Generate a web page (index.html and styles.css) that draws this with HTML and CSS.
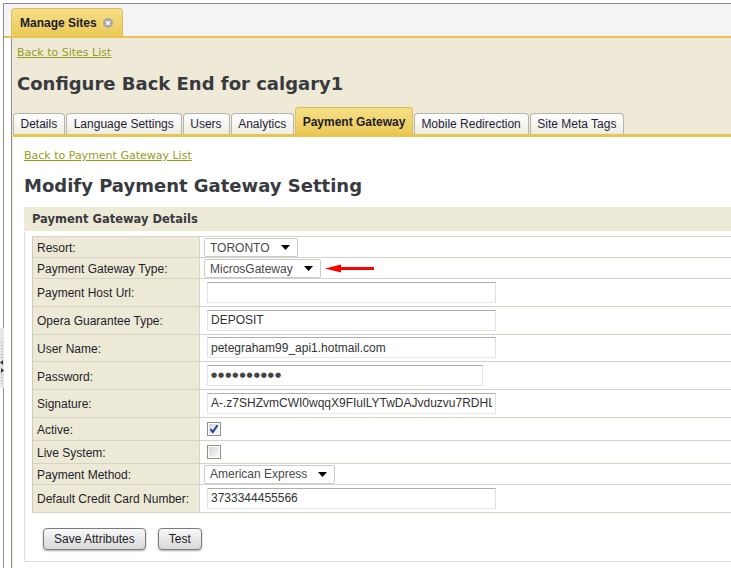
FILE: index.html
```html
<!DOCTYPE html>
<html lang="en">
<head>
<meta charset="utf-8">
<title>Configure Back End</title>
<link rel="stylesheet" href="styles.css">
</head>
<body>
<div class="splitter">
  <svg width="4" height="60" viewBox="0 0 4 60">
    <g fill="#9a9a9a">
      <rect x="1.5" y="14" width="1" height="1"/><rect x="1.5" y="17" width="1" height="1"/><rect x="1.5" y="20" width="1" height="1"/><rect x="1.5" y="23" width="1" height="1"/><rect x="1.5" y="26" width="1" height="1"/><rect x="1.5" y="29" width="1" height="1"/>
      <rect x="1.5" y="46" width="1" height="1"/><rect x="1.5" y="49" width="1" height="1"/><rect x="1.5" y="52" width="1" height="1"/><rect x="1.5" y="55" width="1" height="1"/>
    </g>
    <path d="M0 34.5 L3 32 L3 37 Z M1 40 L4 42.5 L1 45 Z" fill="#333"/>
  </svg>
</div>
<div class="frame">
  <div class="doc-tabs">
    <div class="doc-tab">Manage Sites
      <svg class="close" width="10" height="10" viewBox="0 0 10 10"><circle cx="5" cy="5" r="5" fill="#a9a9a9"/><path d="M3.2 3.2 L6.8 6.8 M6.8 3.2 L3.2 6.8" stroke="#fff" stroke-width="1.4"/></svg>
    </div>
  </div>
  <div class="panel">
    <div class="panel-head">
      <a class="link" href="#">Back to Sites List</a>
      <h1 class="title">Configure Back End for calgary1</h1>
    </div>
    <div class="tabs">
      <div class="tab">Details</div>
      <div class="tab">Language Settings</div>
      <div class="tab">Users</div>
      <div class="tab">Analytics</div>
      <div class="tab active">Payment Gateway</div>
      <div class="tab">Mobile Redirection</div>
      <div class="tab">Site Meta Tags</div>
    </div>
    <div class="content">
      <a class="link" href="#">Back to Payment Gateway List</a>
      <h2 class="title sub">Modify Payment Gateway Setting</h2>
      <div class="section-title">Payment Gateway Details</div>
      <div class="box">
        <table class="form">
          <tr class="r-sel"><td class="lbl"><div class="cell">Resort:</div></td><td class="val"><div class="cell"><span class="select">TORONTO<svg class="tri" width="9" height="5" viewBox="0 0 9 5"><path d="M0 0 H9 L4.5 5 Z" fill="#000"/></svg></span></div></td></tr>
          <tr class="r-sel"><td class="lbl"><div class="cell">Payment Gateway Type:</div></td><td class="val"><div class="cell"><span class="select">MicrosGateway<svg class="tri" width="9" height="5" viewBox="0 0 9 5"><path d="M0 0 H9 L4.5 5 Z" fill="#000"/></svg></span><svg class="red-arrow" width="49" height="9" viewBox="0 0 49 9"><path d="M0 4.5 L16 0.5 L16 3 H49 V6 H16 V8.5 Z" fill="#f00"/></svg></div></td></tr>
          <tr class="r-inp"><td class="lbl"><div class="cell">Payment Host Url:</div></td><td class="val"><div class="cell"><input class="field" type="text" value=""></div></td></tr>
          <tr class="r-inp"><td class="lbl"><div class="cell">Opera Guarantee Type:</div></td><td class="val"><div class="cell"><input class="field" type="text" value="DEPOSIT"></div></td></tr>
          <tr class="r-inp"><td class="lbl"><div class="cell">User Name:</div></td><td class="val"><div class="cell"><input class="field" type="text" value="petegraham99_api1.hotmail.com"></div></td></tr>
          <tr class="r-inp"><td class="lbl"><div class="cell">Password:</div></td><td class="val"><div class="cell"><div class="field pw">●●●●●●●●●●</div></div></td></tr>
          <tr class="r-inp"><td class="lbl"><div class="cell">Signature:</div></td><td class="val"><div class="cell"><input class="field" type="text" value="A-.z7SHZvmCWI0wqqX9FIulLYTwDAJvduzvu7RDHL"></div></td></tr>
          <tr class="r-chk"><td class="lbl"><div class="cell">Active:</div></td><td class="val"><div class="cell"><svg class="chk" width="14" height="14" viewBox="0 0 14 14"><defs><linearGradient id="cg" x1="0" y1="0" x2="1" y2="1"><stop offset="0" stop-color="#d6d6d6"/><stop offset="1" stop-color="#fbfbfb"/></linearGradient></defs><rect x="0.5" y="0.5" width="13" height="13" fill="#fff" stroke="#8e8f8f"/><rect x="2" y="2" width="10" height="10" fill="url(#cg)"/><path d="M3.5 7.2 L5.8 10 L10.5 3.2" fill="none" stroke="#28408c" stroke-width="2"/></svg></div></td></tr>
          <tr class="r-chk"><td class="lbl"><div class="cell">Live System:</div></td><td class="val"><div class="cell"><svg class="chk" width="14" height="14" viewBox="0 0 14 14"><defs><linearGradient id="cg2" x1="0" y1="0" x2="1" y2="1"><stop offset="0" stop-color="#d6d6d6"/><stop offset="1" stop-color="#fbfbfb"/></linearGradient></defs><rect x="0.5" y="0.5" width="13" height="13" fill="#fff" stroke="#8e8f8f"/><rect x="2" y="2" width="10" height="10" fill="url(#cg2)"/></svg></div></td></tr>
          <tr class="r-sel"><td class="lbl"><div class="cell">Payment Method:</div></td><td class="val"><div class="cell"><span class="select">American Express<svg class="tri" width="9" height="5" viewBox="0 0 9 5"><path d="M0 0 H9 L4.5 5 Z" fill="#000"/></svg></span></div></td></tr>
          <tr class="r-inp"><td class="lbl"><div class="cell">Default Credit Card Number:</div></td><td class="val"><div class="cell"><input class="field" type="text" value="3733344455566"></div></td></tr>
        </table>
        <div class="actions">
          <button class="btn" type="button">Save Attributes</button>
          <button class="btn" type="button">Test</button>
        </div>
      </div>
    </div>
  </div>
</div>
</body>
</html>
```
FILE: styles.css
```css
html, body {
  margin: 0;
  overflow: hidden;
  background: #fff;
}
body {
  padding: 3px 0 0 3px;
  font-family: "Liberation Sans", Arial, sans-serif;
  font-size: 12px;
  color: #1e1e30;
  position: relative;
  height: 565px;
}
.splitter {
  position: absolute;
  left: 0;
  top: 328px;
  width: 4px;
  height: 60px;
  background: #e6e6e6;
}
.splitter svg { display: block; }
.frame {
  width: 820px;
  height: 600px;
  border-left: 1px solid #8d8d8d;
  border-top: 1px solid #8d8d8d;
  background: #fff;
  padding-left: 7px;
}
.doc-tabs {
  display: flex;
  margin-left: -7px;
  padding: 4px 0 0 7px;
  background: #f4f4f4;
  border-bottom: 2px solid #e6c54f;
}
.doc-tab {
  display: flex;
  align-items: center;
  gap: 6px;
  height: 27px;
  padding: 0 9px 0 8px;
  font-weight: bold;
  font-size: 12px;
  color: #1c1c2c;
  background: linear-gradient(#f7df88, #ebc956);
  border: 1px solid #dcc060;
  border-bottom: none;
  border-radius: 4px 4px 0 0;
}
.close { display: block; }
.panel {
  background: #eeead7;
  border-left: 1px solid #8d8d8d;
  padding: 8px 0 0 1px;
  height: 560px;
}
.panel-head { padding-left: 4px; }
.link {
  display: block;
  font-family: "DejaVu Sans", Verdana, sans-serif;
  font-size: 11px;
  line-height: 13px;
  color: #979c1e;
  text-decoration: underline;
  width: max-content;
}
.title {
  margin: 14px 0 12px;
  font-family: "DejaVu Sans", Verdana, sans-serif;
  font-size: 18px;
  line-height: 22px;
  font-weight: bold;
  color: #383a40;
}
.tabs {
  display: flex;
  align-items: flex-end;
  gap: 1px;
  border-bottom: 3px solid #e6c551;
}
.tab {
  height: 19px;
  padding: 1px 7px 0 6.5px;
  line-height: 19px;
  border: 1px solid #b4b4b4;
  border-bottom: none;
  border-radius: 4px 4px 0 0;
  background: linear-gradient(#ffffff, #eeece2);
  color: #1e1e3a;
  white-space: nowrap;
}
.tab.active {
  height: 20px;
  padding: 4px 6.5px 2px 6.5px;
  line-height: 20px;
  font-weight: bold;
  border-color: #dcc060;
  background: linear-gradient(#f7df88, #eac955);
  color: #1c1c2c;
}
.content {
  background: #fff;
  padding: 12px 0 6px 11px;
  border-bottom: 1px solid #dcdcdc;
}
.title.sub { margin: 13px 0 10px; }
.section-title {
  height: 24px;
  line-height: 24px;
  padding-left: 8px;
  background: #eeead8;
  font-family: "DejaVu Sans", Verdana, sans-serif;
  font-size: 11.5px;
  font-weight: bold;
  color: #3a3a40;
}
.box {
  border-left: 1px solid #dedede;
  border-bottom: 1px solid #dcdcdc;
  padding: 5px 0 11px 7px;
}
.form {
  border-collapse: separate;
  border-spacing: 0;
  width: 760px;
  border-top: 1px solid #d6d3c6;
  border-left: 1px solid #cfcbbd;
}
.form td {
  padding: 0;
  border-bottom: 1px solid #d6d3c6;
}
.cell {
  box-sizing: border-box;
  display: flex;
  align-items: center;
  white-space: nowrap;
}
.r-sel .cell { height: 20px; }
.r-inp .cell { height: 26.75px; }
.r-chk .cell { height: 22px; }
.lbl {
  width: 166px;
  background: #ede9d7;
  border-right: 1px solid #d6d3c6;
  color: #1e1e2a;
}
.lbl .cell { padding: 2px 0 0 4px; }
.val .cell { padding-left: 4px; }
.select {
  display: flex;
  align-items: center;
  box-sizing: border-box;
  height: 19px;
  margin-top: 1px;
  padding: 0 7px 0 5px;
  gap: 11px;
  border: 1px solid #cacaca;
  border-radius: 2px;
  background: #fff;
  color: #4a4a4a;
  font-size: 12px;
}
.tri { display: block; }
.red-arrow {
  display: block;
  margin: 0 0 0 4px;
}
.field {
  display: block;
  box-sizing: border-box;
  width: 289px;
  height: 21px;
  margin: 0 0 0 3px;
  padding: 0 3px;
  border: 1px solid;
  border-color: #abadb3 #dbdfe6 #e3e9ef #e2e3ea;
  background: #fff;
  font-family: "Liberation Sans", Arial, sans-serif;
  font-size: 12px;
  color: #333;
  outline: none;
}
.field.pw {
  width: 276px;
  line-height: 19px;
  font-family: "DejaVu Sans", sans-serif;
  font-size: 7px;
  letter-spacing: 1px;
  color: #444;
  overflow: hidden;
}
.chk {
  display: block;
  margin: 1px 0 0 3px;
}
.actions {
  display: flex;
  gap: 12px;
  margin: 15px 0 0 11px;
}
.btn {
  height: 22px;
  padding: 0 10px;
  border: 1px solid #7a7a7a;
  border-radius: 4px;
  background: linear-gradient(#f8f8f8, #e8e8e8 50%, #d8d8d8);
  box-shadow: 0 1px 2px rgba(0, 0, 0, 0.35);
  font-family: "Liberation Sans", Arial, sans-serif;
  font-size: 12px;
  color: #1e1e2a;
}
```
